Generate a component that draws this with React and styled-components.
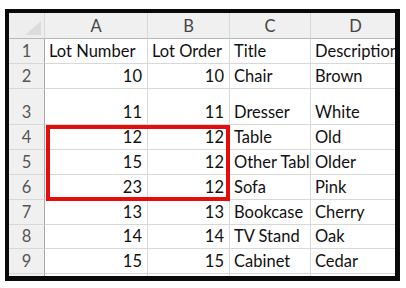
import React from 'react'
import styled, { createGlobalStyle } from 'styled-components'

const GlobalStyle = createGlobalStyle`
  html, body {
    margin: 0;
    padding: 0;
    background: #ffffff;
  }
  * {
    box-sizing: border-box;
  }
`

const Page = styled.div`
  padding: 9px 0 0 5px;
  font-family: Lato, "Open Sans", sans-serif;
`

const Frame = styled.div`
  width: 395px;
  height: 272px;
  border-style: solid;
  border-color: #0a0a0a;
  border-width: 4px 5px 5px 4px;
  background: #ffffff;
  overflow: hidden;
`

const Sheet = styled.div`
  position: relative;
  display: grid;
  grid-template-columns: 36px 103px 82px 81px 90px;
  grid-template-rows: 26px 25px 25px 36px 25px 25px 25px 25px 24px 25px 10px;
  width: 398px;
  background: #ffffff;
`

const Corner = styled.div`
  display: flex;
  align-items: flex-end;
  justify-content: flex-end;
  padding: 0 3px 3px 0;
  background: #eeeeee;
  border-right: 1px solid #d8d8d8;
  border-bottom: 1px solid #b8b8b8;
`

const CornerMark = styled.div`
  width: 0;
  height: 0;
  border-left: 16px solid transparent;
  border-bottom: 14px solid #dcdcdc;
`

const ColHead = styled.div`
  display: flex;
  align-items: center;
  justify-content: center;
  padding-top: 1px;
  background: #f0f0f0;
  color: #444444;
  font-size: 16.5px;
  border-right: 1px solid #d8d8d8;
  border-bottom: 1px solid #b8b8b8;
`

const RowHead = styled.div`
  display: flex;
  align-items: flex-end;
  justify-content: center;
  padding-bottom: 2px;
  background: #f0f0f0;
  color: #555555;
  font-size: 16.5px;
  border-right: 1px solid #a9a9a9;
  border-bottom: 1px solid ${p => (p.$last ? '#f0f0f0' : '#d8d8d8')};
`

const Cell = styled.div`
  display: flex;
  align-items: flex-end;
  justify-content: ${p => (p.$num ? 'flex-end' : 'flex-start')};
  padding: 0 ${p => (p.$num ? '5px' : '3px')} 2px ${p => (p.$num ? '3px' : '4px')};
  color: #111111;
  font-size: 16.5px;
  white-space: nowrap;
  overflow: hidden;
  border-right: 1px solid #d8d8d8;
  border-bottom: 1px solid ${p => (p.$last ? '#ffffff' : '#d8d8d8')};
`

const Highlight = styled.div`
  position: absolute;
  left: 37px;
  top: 112px;
  width: 184px;
  height: 76px;
  border: 4px solid #e50c0c;
  pointer-events: none;
`

const columns = ['A', 'B', 'C', 'D']

const rows = [
  ['Lot Number', 'Lot Order', 'Title', 'Description'],
  [10, 10, 'Chair', 'Brown'],
  [11, 11, 'Dresser', 'White'],
  [12, 12, 'Table', 'Old'],
  [15, 12, 'Other Table', 'Older'],
  [23, 12, 'Sofa', 'Pink'],
  [13, 13, 'Bookcase', 'Cherry'],
  [14, 14, 'TV Stand', 'Oak'],
  [15, 15, 'Cabinet', 'Cedar'],
]

export default function App() {
  return (
    <Page>
      <GlobalStyle />
      <Frame>
        <Sheet>
          <Corner>
            <CornerMark />
          </Corner>
          {columns.map(c => (
            <ColHead key={c}>{c}</ColHead>
          ))}

          {rows.map((row, i) => (
            <React.Fragment key={i}>
              <RowHead>{i + 1}</RowHead>
              {row.map((v, j) => (
                <Cell key={j} $num={typeof v === 'number'}>
                  {v}
                </Cell>
              ))}
            </React.Fragment>
          ))}

          <RowHead $last />
          {columns.map(c => (
            <Cell key={c} $last />
          ))}

          <Highlight />
        </Sheet>
      </Frame>
    </Page>
  )
}
